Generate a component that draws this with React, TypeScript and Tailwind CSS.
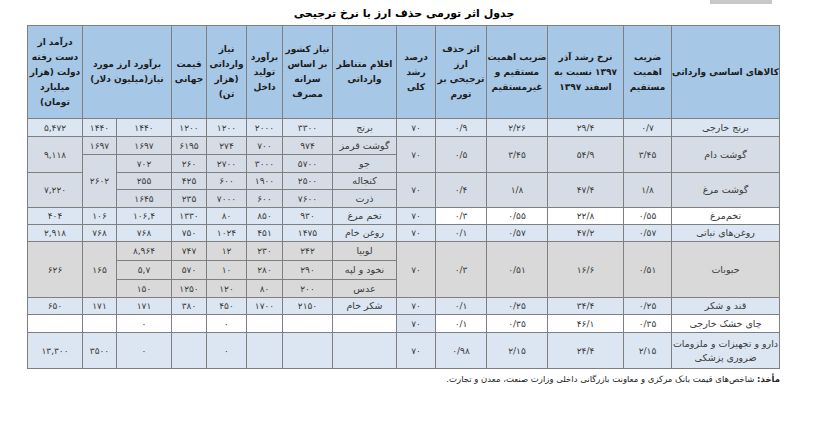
import type { ReactNode } from "react";

const BLUE = "bg-[#dce6f2]";
const GB = "bg-[#d6dce5]";
const GR = "bg-[#d9d9d9]";
const W = "bg-white";

function Td({
  children,
  rs,
  bg,
  name,
}: {
  children?: ReactNode;
  rs?: number;
  bg?: string;
  name?: boolean;
}) {
  return (
    <td
      rowSpan={rs}
      className={`whitespace-nowrap border border-[#7f7f7f] p-0 text-center align-middle leading-[14px] text-[#3a3a3a] ${
        name ? "text-[9.5px]" : "text-[9px]"
      } ${bg ?? ""}`}
    >
      {children}
    </td>
  );
}

function Th({ children, cs }: { children: ReactNode; cs?: number }) {
  return (
    <th
      colSpan={cs}
      className="whitespace-nowrap border border-[#7f7f7f] bg-[#a7c7e7] p-0 text-center align-middle text-[9px] font-bold leading-[15px] text-[#1c1c1c]"
    >
      {children}
    </th>
  );
}

export default function App() {
  return (
    <div
      className="h-[423px] w-[835px] overflow-hidden bg-white"
      style={{ fontFamily: '"DejaVu Sans", sans-serif' }}
    >
      <div className="h-[4px]">
        <div className="ml-[710px] h-[4px] w-[62px] bg-[#c8c8c8]" />
      </div>
      <div dir="rtl" className="ml-[28px] w-[752px]">
        <h1 className="h-[21px] text-center text-[11px] font-bold leading-[19px] text-black">
          جدول اثر تورمی حذف ارز با نرخ ترجیحی
        </h1>
        <table className="w-[752px] table-fixed border-collapse border border-[#6b6b6b]">
          <colgroup>
            <col className="w-[108px]" />
            <col className="w-[48px]" />
            <col className="w-[76px]" />
            <col className="w-[61px]" />
            <col className="w-[51px]" />
            <col className="w-[39px]" />
            <col className="w-[64px]" />
            <col className="w-[50px]" />
            <col className="w-[36px]" />
            <col className="w-[40px]" />
            <col className="w-[35px]" />
            <col className="w-[55px]" />
            <col className="w-[34px]" />
            <col className="w-[55px]" />
          </colgroup>
          <thead>
            <tr className="h-[93px]">
              <Th>کالاهای اساسی وارداتی</Th>
              <Th>
                ضریب
                <br />
                اهمیت
                <br />
                مستقیم
              </Th>
              <Th>
                نرخ رشد آذر
                <br />
                ۱۳۹۷ نسبت به
                <br />
                اسفند ۱۳۹۷
              </Th>
              <Th>
                ضریب اهمیت
                <br />
                مستقیم و
                <br />
                غیرمستقیم
              </Th>
              <Th>
                اثر حذف
                <br />
                ارز
                <br />
                ترجیحی بر
                <br />
                تورم
              </Th>
              <Th>
                درصد
                <br />
                رشد
                <br />
                کلی
              </Th>
              <Th>
                اقلام متناظر
                <br />
                وارداتی
              </Th>
              <Th>
                نیاز کشور
                <br />
                بر اساس
                <br />
                سرانه
                <br />
                مصرف
              </Th>
              <Th>
                برآورد
                <br />
                تولید
                <br />
                داخل
              </Th>
              <Th>
                نیاز
                <br />
                وارداتی
                <br />
                (هزار
                <br />
                تن)
              </Th>
              <Th>
                قیمت
                <br />
                جهانی
              </Th>
              <Th cs={2}>
                برآورد ارز مورد
                <br />
                نیاز(میلیون دلار)
              </Th>
              <Th>
                درآمد از
                <br />
                دست رفته
                <br />
                دولت (هزار
                <br />
                میلیارد
                <br />
                تومان)
              </Th>
            </tr>
          </thead>
          <tbody>
            <tr className={`h-[18px] ${BLUE}`}>
              <Td name>برنج خارجی</Td>
              <Td>۰/۷</Td>
              <Td>۲۹/۴</Td>
              <Td>۲/۲۶</Td>
              <Td>۰/۹</Td>
              <Td>۷۰</Td>
              <Td name>برنج</Td>
              <Td>۳۳۰۰</Td>
              <Td>۲۰۰۰</Td>
              <Td>۱۲۰۰</Td>
              <Td>۱۲۰۰</Td>
              <Td>۱۴۴۰</Td>
              <Td>۱۴۴۰</Td>
              <Td>۵,۴۷۲</Td>
            </tr>
            <tr className={`h-[18px] ${GB}`}>
              <Td name rs={2}>گوشت دام</Td>
              <Td rs={2}>۳/۴۵</Td>
              <Td rs={2}>۵۴/۹</Td>
              <Td rs={2}>۳/۴۵</Td>
              <Td rs={2}>۰/۵</Td>
              <Td rs={2}>۷۰</Td>
              <Td name>گوشت قرمز</Td>
              <Td>۹۷۴</Td>
              <Td>۷۰۰</Td>
              <Td>۲۷۴</Td>
              <Td>۶۱۹۵</Td>
              <Td>۱۶۹۷</Td>
              <Td>۱۶۹۷</Td>
              <Td rs={2}>۹,۱۱۸</Td>
            </tr>
            <tr className={`h-[18px] ${GB}`}>
              <Td name>جو</Td>
              <Td>۵۷۰۰</Td>
              <Td>۳۰۰۰</Td>
              <Td>۲۷۰۰</Td>
              <Td>۲۶۰</Td>
              <Td>۷۰۲</Td>
              <Td rs={3}>۲۶۰۲</Td>
            </tr>
            <tr className={`h-[17px] ${GB}`}>
              <Td name rs={2}>گوشت مرغ</Td>
              <Td rs={2}>۱/۸</Td>
              <Td rs={2}>۴۷/۴</Td>
              <Td rs={2}>۱/۸</Td>
              <Td rs={2}>۰/۴</Td>
              <Td rs={2}>۷۰</Td>
              <Td name>کنجاله</Td>
              <Td>۲۵۰۰</Td>
              <Td>۱۹۰۰</Td>
              <Td>۶۰۰</Td>
              <Td>۴۲۵</Td>
              <Td>۲۵۵</Td>
              <Td rs={2}>۷,۲۲۰</Td>
            </tr>
            <tr className={`h-[18px] ${GB}`}>
              <Td name>ذرت</Td>
              <Td>۷۶۰۰</Td>
              <Td>۶۰۰</Td>
              <Td>۷۰۰۰</Td>
              <Td>۲۳۵</Td>
              <Td>۱۶۴۵</Td>
            </tr>
            <tr className={`h-[17px] ${BLUE}`}>
              <Td name bg={W}>تخم‌مرغ</Td>
              <Td bg={W}>۰/۵۵</Td>
              <Td bg={W}>۲۲/۸</Td>
              <Td bg={W}>۰/۵۵</Td>
              <Td bg={W}>۰/۳</Td>
              <Td>۷۰</Td>
              <Td name>تخم مرغ</Td>
              <Td>۹۳۰</Td>
              <Td>۸۵۰</Td>
              <Td>۸۰</Td>
              <Td>۱۳۳۰</Td>
              <Td>۱۰۶,۴</Td>
              <Td>۱۰۶</Td>
              <Td>۴۰۴</Td>
            </tr>
            <tr className={`h-[17px] ${BLUE}`}>
              <Td name>روغن‌های نباتی</Td>
              <Td>۰/۵۷</Td>
              <Td>۴۷/۲</Td>
              <Td>۰/۵۷</Td>
              <Td>۰/۱</Td>
              <Td>۷۰</Td>
              <Td name>روغن خام</Td>
              <Td>۱۴۷۵</Td>
              <Td>۴۵۱</Td>
              <Td>۱۰۲۴</Td>
              <Td>۷۵۰</Td>
              <Td>۷۶۸</Td>
              <Td>۷۶۸</Td>
              <Td>۲,۹۱۸</Td>
            </tr>
            <tr className={`h-[19px] ${GR}`}>
              <Td name rs={3}>حبوبات</Td>
              <Td rs={3}>۰/۵۱</Td>
              <Td rs={3}>۱۶/۶</Td>
              <Td rs={3}>۰/۵۱</Td>
              <Td rs={3}>۰/۳</Td>
              <Td rs={3}>۷۰</Td>
              <Td name>لوبیا</Td>
              <Td>۲۴۲</Td>
              <Td>۲۳۰</Td>
              <Td>۱۲</Td>
              <Td>۷۴۷</Td>
              <Td>۸,۹۶۴</Td>
              <Td rs={3}>۱۶۵</Td>
              <Td rs={3}>۶۲۶</Td>
            </tr>
            <tr className={`h-[19px] ${GR}`}>
              <Td name>نخود و لپه</Td>
              <Td>۲۹۰</Td>
              <Td>۲۸۰</Td>
              <Td>۱۰</Td>
              <Td>۵۷۰</Td>
              <Td>۵,۷</Td>
            </tr>
            <tr className={`h-[18px] ${GR}`}>
              <Td name>عدس</Td>
              <Td>۲۰۰</Td>
              <Td>۸۰</Td>
              <Td>۱۲۰</Td>
              <Td>۱۲۵۰</Td>
              <Td>۱۵۰</Td>
            </tr>
            <tr className={`h-[17px] ${BLUE}`}>
              <Td name>قند و شکر</Td>
              <Td>۰/۲۵</Td>
              <Td>۳۴/۴</Td>
              <Td>۰/۲۵</Td>
              <Td>۰/۱</Td>
              <Td>۷۰</Td>
              <Td name>شکر خام</Td>
              <Td>۲۱۵۰</Td>
              <Td>۱۷۰۰</Td>
              <Td>۴۵۰</Td>
              <Td>۳۸۰</Td>
              <Td>۱۷۱</Td>
              <Td>۱۷۱</Td>
              <Td>۶۵۰</Td>
            </tr>
            <tr className={`h-[18px] ${W}`}>
              <Td name>چای خشک خارجی</Td>
              <Td>۰/۳۵</Td>
              <Td>۴۶/۱</Td>
              <Td>۰/۳۵</Td>
              <Td>۰/۱</Td>
              <Td bg={BLUE}>۷۰</Td>
              <Td />
              <Td />
              <Td />
              <Td>۰</Td>
              <Td />
              <Td>۰</Td>
              <Td />
              <Td />
            </tr>
            <tr className={`h-[36px] ${BLUE}`}>
              <Td name>
                دارو و تجهیزات و ملزومات
                <br />
                ضروری پزشکی
              </Td>
              <Td>۲/۱۵</Td>
              <Td>۲۴/۴</Td>
              <Td>۲/۱۵</Td>
              <Td>۰/۹۸</Td>
              <Td>۷۰</Td>
              <Td />
              <Td />
              <Td />
              <Td>۰</Td>
              <Td />
              <Td>۰</Td>
              <Td>۳۵۰۰</Td>
              <Td>۱۳,۳۰۰</Td>
            </tr>
          </tbody>
        </table>
        <p className="mt-[3px] text-[8.5px] leading-[14px] text-[#222]">
          <span className="font-bold">مأخذ:</span> شاخص‌های قیمت بانک مرکزی و معاونت بازرگانی داخلی وزارت صنعت، معدن و تجارت.
        </p>
      </div>
    </div>
  );
}
